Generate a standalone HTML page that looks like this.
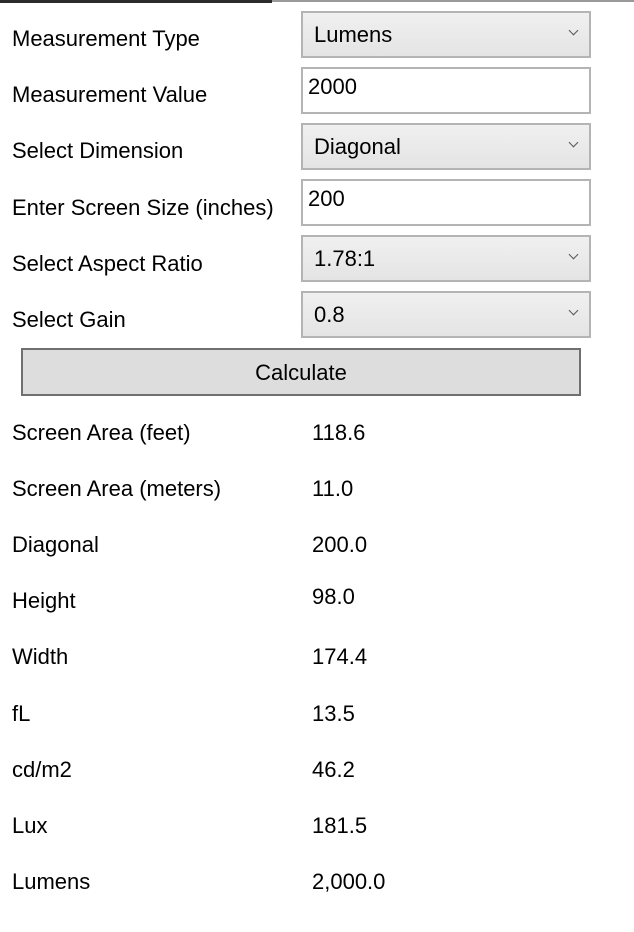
<!DOCTYPE html>
<html><head><meta charset="utf-8"><style>
body{margin:0;width:634px;height:932px;background:#fff;font-family:"Liberation Sans",sans-serif;color:#000;position:relative;overflow:hidden}
.a{position:absolute}
.lbl{position:absolute;left:12px;font-size:22px;line-height:26px}
.box{position:absolute;left:301px;width:286px;height:43px;border:2px solid #b4b4b4;box-sizing:content-box}
.dd{background:linear-gradient(#f0f0f0,#e4e4e4)}
.dd span{position:absolute;left:11px;top:9px;font-size:22px;line-height:26px}
.dd i{position:absolute;right:12px;top:14px;width:6px;height:6px;border-right:1.5px solid #555;border-bottom:1.5px solid #555;transform:rotate(45deg)}
.tb{background:#fff}
.tb span{position:absolute;left:5px;top:5px;font-size:22px;line-height:26px}
.val{position:absolute;left:312px;font-size:22px;line-height:26px}
</style></head><body>
<div class="a" style="left:0;top:0;width:272px;height:3px;background:#2b2b2b"></div>
<div class="a" style="left:272px;top:0;width:362px;height:2px;background:#9a9a9a"></div>

<div class="lbl" style="top:26px">Measurement Type</div>
<div class="box dd" style="top:11px"><span>Lumens</span><i></i></div>
<div class="lbl" style="top:82px">Measurement Value</div>
<div class="box tb" style="top:67px"><span>2000</span></div>
<div class="lbl" style="top:138px">Select Dimension</div>
<div class="box dd" style="top:123px"><span>Diagonal</span><i></i></div>
<div class="lbl" style="top:195px">Enter Screen Size (inches)</div>
<div class="box tb" style="top:179px"><span>200</span></div>
<div class="lbl" style="top:251px">Select Aspect Ratio</div>
<div class="box dd" style="top:235px"><span>1.78:1</span><i></i></div>
<div class="lbl" style="top:307px">Select Gain</div>
<div class="box dd" style="top:291px"><span>0.8</span><i></i></div>

<div class="a" style="left:21px;top:348px;width:556px;height:44px;border:2px solid #707070;background:#dddddd;font-size:22px;line-height:46px;text-align:center">Calculate</div>

<div class="lbl" style="top:420px">Screen Area (feet)</div><div class="val" style="top:420px">118.6</div>
<div class="lbl" style="top:476px">Screen Area (meters)</div><div class="val" style="top:476px">11.0</div>
<div class="lbl" style="top:532px">Diagonal</div><div class="val" style="top:532px">200.0</div>
<div class="lbl" style="top:588px">Height</div><div class="val" style="top:584px">98.0</div>
<div class="lbl" style="top:644px">Width</div><div class="val" style="top:644px">174.4</div>
<div class="lbl" style="top:701px">fL</div><div class="val" style="top:701px">13.5</div>
<div class="lbl" style="top:757px">cd/m2</div><div class="val" style="top:757px">46.2</div>
<div class="lbl" style="top:813px">Lux</div><div class="val" style="top:813px">181.5</div>
<div class="lbl" style="top:869px">Lumens</div><div class="val" style="top:869px">2,000.0</div>
</body></html>
